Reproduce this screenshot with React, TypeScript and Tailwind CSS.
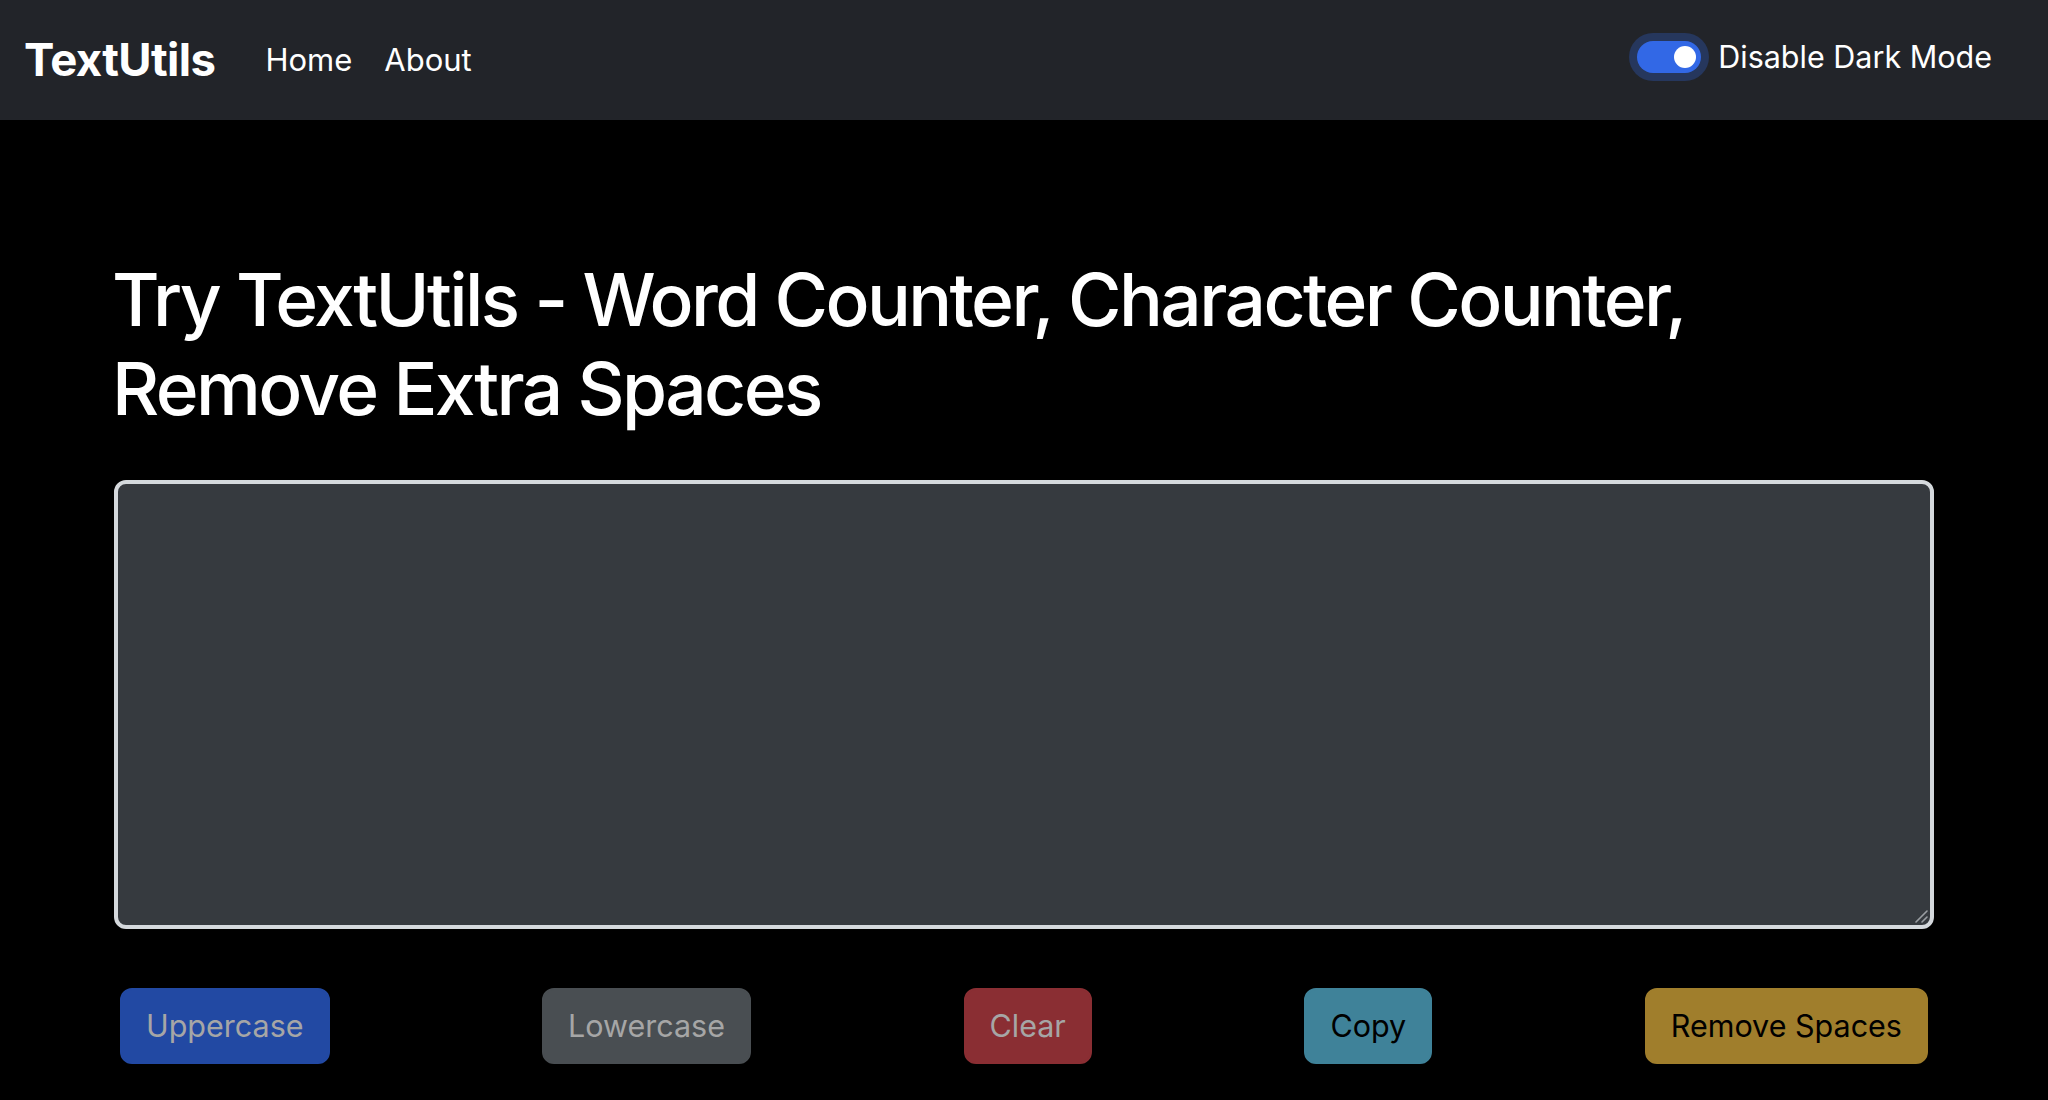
import { useState } from "react";

const buttons = [
  { label: "Uppercase", cls: "bg-[#2249a3] border-[#2249a3] text-[#a6a6a6]" },
  { label: "Lowercase", cls: "bg-[#494e52] border-[#494e52] text-[#a6a6a6]" },
  { label: "Clear", cls: "bg-[#8a2e33] border-[#8a2e33] text-[#a6a6a6]" },
  { label: "Copy", cls: "bg-[#3f8299] border-[#3f8299] text-black" },
  { label: "Remove Spaces", cls: "bg-[#a07e2c] border-[#a07e2c] text-black" },
];

const App = () => {
  const [text, setText] = useState("");
  const [dark, setDark] = useState(true);

  return (
    <div className="min-h-screen bg-black text-white font-['Inter',sans-serif]">
      {/* navbar */}
      <nav className="h-[120px] bg-[#222429] flex items-center pl-[24px] pr-[56px]">
        <a href="#" className="text-[45.5px] font-bold tracking-[-0.6px] mr-[34px]">
          TextUtils
        </a>
        <ul className="flex items-center text-[31px]">
          <li className="px-[16px]">
            <a href="#">Home</a>
          </li>
          <li className="pl-[16px]">
            <a href="#">About</a>
          </li>
        </ul>
        <div className="ml-auto flex items-center gap-[17px] -mt-[6px]">
          <button
            onClick={() => setDark(!dark)}
            className="w-[64px] h-[32px] rounded-full bg-[#3268e6] ring-[8px] ring-[#26375d] flex items-center justify-end px-[5px]"
          >
            <span className="w-[22px] h-[22px] rounded-full bg-white" />
          </button>
          <span className="text-[30.5px]">Disable Dark Mode</span>
        </div>
      </nav>

      {/* main */}
      <div className="w-[1820px] mx-auto pb-[40px]">
        <h1 className="mt-[135px] text-[73px] leading-[89px] font-medium tracking-[-2.6px] -ml-[2px]">
          Try TextUtils - Word Counter, Character Counter,
          <br />
          Remove Extra Spaces
        </h1>
        <div className="relative mt-[47px]">
          <textarea
            value={text}
            onChange={(e) => setText(e.target.value)}
            className="block w-full h-[449px] bg-[#363a3f] border-[4px] border-[#d5d9dd] rounded-[12px] text-white text-[32px] p-[20px] outline-none resize-none"
          />
          {/* resize grip */}
          <svg
            className="absolute right-[6px] bottom-[6px] pointer-events-none"
            width="14"
            height="14"
            viewBox="0 0 14 14"
          >
            <path d="M13 2 L2 13 M13 8 L8 13" stroke="#9a9ea2" strokeWidth="1.6" strokeLinecap="round" />
          </svg>
        </div>
        <div className="mt-[59px] flex justify-between px-[6px]">
          {buttons.map((b) => (
            <button
              key={b.label}
              className={`border-2 rounded-[12px] px-[24px] py-[12px] text-[30.5px] leading-[48px] ${b.cls}`}
            >
              {b.label}
            </button>
          ))}
        </div>
      </div>
    </div>
  );
};

export default App;
